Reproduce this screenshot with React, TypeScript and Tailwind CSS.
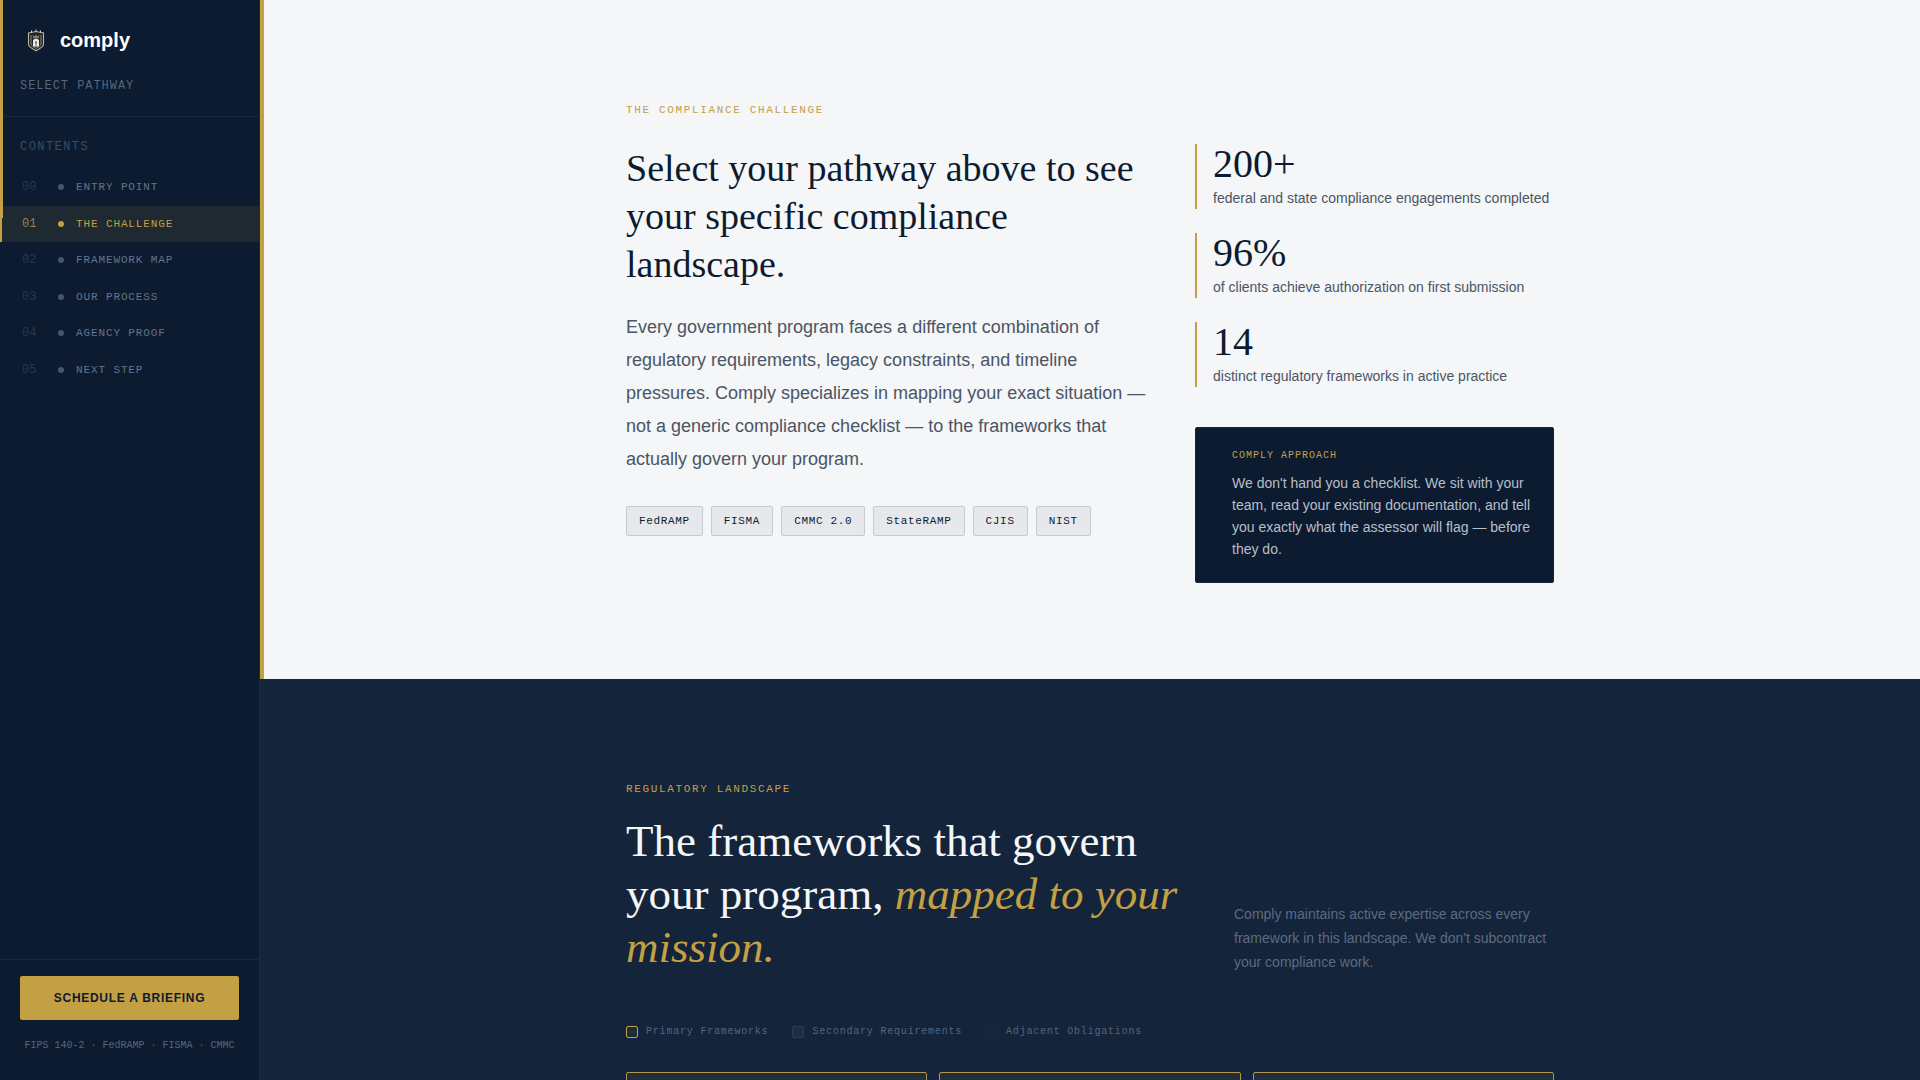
const navItems = [
  { num: '00', label: 'ENTRY POINT', active: false },
  { num: '01', label: 'THE CHALLENGE', active: true },
  { num: '02', label: 'FRAMEWORK MAP', active: false },
  { num: '03', label: 'OUR PROCESS', active: false },
  { num: '04', label: 'AGENCY PROOF', active: false },
  { num: '05', label: 'NEXT STEP', active: false },
]

const frameworks = ['FedRAMP', 'FISMA', 'CMMC 2.0', 'StateRAMP', 'CJIS', 'NIST']

const stats = [
  { value: '200+', label: 'federal and state compliance engagements completed' },
  { value: '96%', label: 'of clients achieve authorization on first submission' },
  { value: '14', label: 'distinct regulatory frameworks in active practice' },
]

const legend = [
  { label: 'Primary Frameworks', swatch: 'border-[#c4a045] bg-[#1f2b38]' },
  { label: 'Secondary Requirements', swatch: 'border-[#2b3c53] bg-[#1d2e45]' },
  { label: 'Adjacent Obligations', swatch: 'border-[#1a2a41] bg-[#15253c]' },
]

const MONO = "font-['Liberation_Mono',monospace]"
const SERIF = "font-['Liberation_Serif',serif]"

function Logo() {
  return (
    <svg className="size-8" viewBox="0 0 32 32" fill="none" aria-hidden="true">
      <path
        d="M8.500 9 11 8.500 16 7.500 21 8.500 23.500 9V20.500c0 2.200-4 4.500-7.500 6.300-3.500-1.800-7.500-4.100-7.500-6.300z"
        fill="#1c2530"
        stroke="#b9b79f"
        strokeWidth="1.100"
      />
      <path d="M11 11v9.200c0 1.500 2.300 2.700 5 4.200 2.700-1.500 5-2.700 5-4.200V11" stroke="#8f8a68" strokeWidth="1" />
      <path d="M11.500 8.500V6.500M16 7.500V5.500M20.500 8.500V6.500" stroke="#d9d6c2" strokeWidth="1" />
      <path d="M12.500 11 14.500 12.500 16 10.500 17.500 12.500 19.500 11 18.500 14.500h-5z" fill="#9c8440" />
      <path d="M13 16.500c0-1 1.500-1.500 3-1.500s3 .5 3 1.500V22.500h-6z" fill="#f1f1ec" />
      <path d="M16 18v3.500M14.800 18h2.400" stroke="#49525e" strokeWidth="1" />
    </svg>
  )
}

function Sidebar() {
  return (
    <aside className="relative flex w-[260px] shrink-0 flex-col border-r border-[#1c2b40] bg-[#0c1b30]">
      {/* scroll progress */}
      <div className="absolute top-0 left-0 h-[218px] w-[3px] bg-[#c4a045]" />

      <div className="border-b border-[#172940] px-5 pt-6 pb-5">
        <a href="#top" className="flex items-center gap-2 text-xl font-bold text-white">
          <Logo />
          comply
        </a>
        <p className={`${MONO} mt-5 text-xs leading-5 tracking-[0.08em] text-[#55667d]`}>SELECT PATHWAY</p>
      </div>

      <nav aria-label="Contents" className="flex-1 pt-5">
        <p className={`${MONO} mb-3 px-5 text-xs leading-5 tracking-[0.12em] text-[#3a4b62]`}>CONTENTS</p>
        <ul>
          {navItems.map((item) => (
            <li key={item.num}>
              <a
                href={`#section-${item.num}`}
                className={`${MONO} flex items-center gap-3 border-l-2 py-2.5 pl-5 text-[11px] leading-normal tracking-[0.08em] ${
                  item.active
                    ? 'border-[#c4a045] bg-[#1e2932] text-[#c4a045]'
                    : 'border-transparent text-[#64748a]'
                }`}
              >
                <span
                  className={`w-6 text-xs leading-4 tracking-normal ${
                    item.active ? 'text-[#9a8344]' : 'text-[#273850]'
                  }`}
                >
                  {item.num}
                </span>
                <span className={`size-1.5 rounded-full ${item.active ? 'bg-[#c4a045]' : 'bg-[#46566c]'}`} />
                {item.label}
              </a>
            </li>
          ))}
        </ul>
      </nav>

      <div className="border-t border-[#172940] px-5 pt-4 pb-6">
        <button
          type="button"
          className="h-11 w-full rounded-xs bg-[#c4a045] text-xs font-bold tracking-[0.06em] text-[#0c1b30]"
        >
          SCHEDULE A BRIEFING
        </button>
        <p className={`${MONO} mt-4 text-center text-[10px] leading-5 whitespace-nowrap text-[#55667d]`}>
          FIPS 140-2 · FedRAMP · FISMA · CMMC
        </p>
      </div>
    </aside>
  )
}

function Challenge() {
  return (
    <section className="relative bg-[#f4f6f8] pt-[100px] pb-24">
      <div className="absolute inset-y-0 left-0 w-1 bg-[#c4a045]" />
      <div className="mx-auto max-w-[1024px] px-12">
        <p className={`${MONO} mb-6 text-[11px] leading-5 tracking-[0.15em] text-[#c4a045]`}>
          THE COMPLIANCE CHALLENGE
        </p>
        <div className="grid grid-cols-[1fr_359px] items-start gap-12">
          <div>
            <h2 className={`${SERIF} text-[38px] leading-[48px] text-[#0c1b30]`}>
              Select your pathway above to see your specific compliance landscape.
            </h2>
            <p className="mt-[23px] text-lg leading-[33px] text-[#4a5565]">
              Every government program faces a different combination of regulatory requirements, legacy
              constraints, and timeline pressures. Comply specializes in mapping your exact situation — not a
              generic compliance checklist — to the frameworks that actually govern your program.
            </p>
            <ul className="mt-[30px] flex flex-wrap gap-2">
              {frameworks.map((name) => (
                <li
                  key={name}
                  className={`${MONO} rounded-xs border border-[#c8ccd2] bg-[#e6e8eb] px-3 py-1.5 text-[11px] leading-4 tracking-[0.06em] text-[#0c1b30]`}
                >
                  {name}
                </li>
              ))}
            </ul>
          </div>

          <div>
            <dl className="space-y-6">
              {stats.map((stat) => (
                <div key={stat.value} className="flex flex-col gap-1 border-l-2 border-[#c4a045] pl-4">
                  <dt className="order-2 text-sm leading-[21px] text-[#4a5565]">{stat.label}</dt>
                  <dd className={`${SERIF} text-[40px] leading-10 text-[#0c1b30]`}>{stat.value}</dd>
                </div>
              ))}
            </dl>
            <div className="mt-10 rounded-xs border border-[#15253c] bg-[#0c1b30] pt-5 pr-5 pb-[22px] pl-9">
              <p className={`${MONO} mb-2 text-[10px] leading-4 tracking-[0.1em] text-[#c4a045]`}>
                COMPLY APPROACH
              </p>
              <p className="text-sm leading-[22px] text-[#b8bfc9]">
                We don't hand you a checklist. We sit with your team, read your existing documentation, and tell
                you exactly what the assessor will flag — before they do.
              </p>
            </div>
          </div>
        </div>
      </div>
    </section>
  )
}

function Landscape() {
  return (
    <section className="bg-[#14243b] pt-[100px] pb-24">
      <div className="mx-auto max-w-[1024px] px-12">
        <p className={`${MONO} mb-4 text-[11px] leading-5 tracking-[0.15em] text-[#c4a045]`}>
          REGULATORY LANDSCAPE
        </p>
        <div className="grid grid-cols-[1fr_320px] items-end gap-12">
          <h2 className={`${SERIF} text-[45px] leading-[53px] text-[#f4f6f8]`}>
            The frameworks that govern your program,{' '}
            <em className="text-[#c4a045]">mapped to your mission.</em>
          </h2>
          <p className="text-sm leading-6 text-[#5c6b80]">
            Comply maintains active expertise across every framework in this landscape. We don't subcontract
            your compliance work.
          </p>
        </div>

        <ul className={`${MONO} mt-[50px] flex gap-6 text-[10px] leading-4 tracking-[0.08em] text-[#55667d]`}>
          {legend.map((entry) => (
            <li key={entry.label} className="flex items-center gap-2">
              <span className={`size-3 rounded-xs border ${entry.swatch}`} />
              {entry.label}
            </li>
          ))}
        </ul>

        <div className="mt-8 grid grid-cols-3 gap-3">
          <div className="h-40 rounded-xs border border-[#b0964c] bg-[#202e3c]" />
          <div className="h-40 rounded-xs border border-[#b0964c] bg-[#202e3c]" />
          <div className="h-40 rounded-xs border border-[#b0964c] bg-[#202e3c]" />
        </div>
      </div>
    </section>
  )
}

export default function App() {
  return (
    <div className="flex h-screen overflow-hidden bg-[#14243b] font-['Liberation_Sans',sans-serif]">
      <Sidebar />
      <main className="min-w-0 flex-1 overflow-y-auto [scrollbar-width:none]">
        <Challenge />
        <Landscape />
      </main>
    </div>
  )
}
